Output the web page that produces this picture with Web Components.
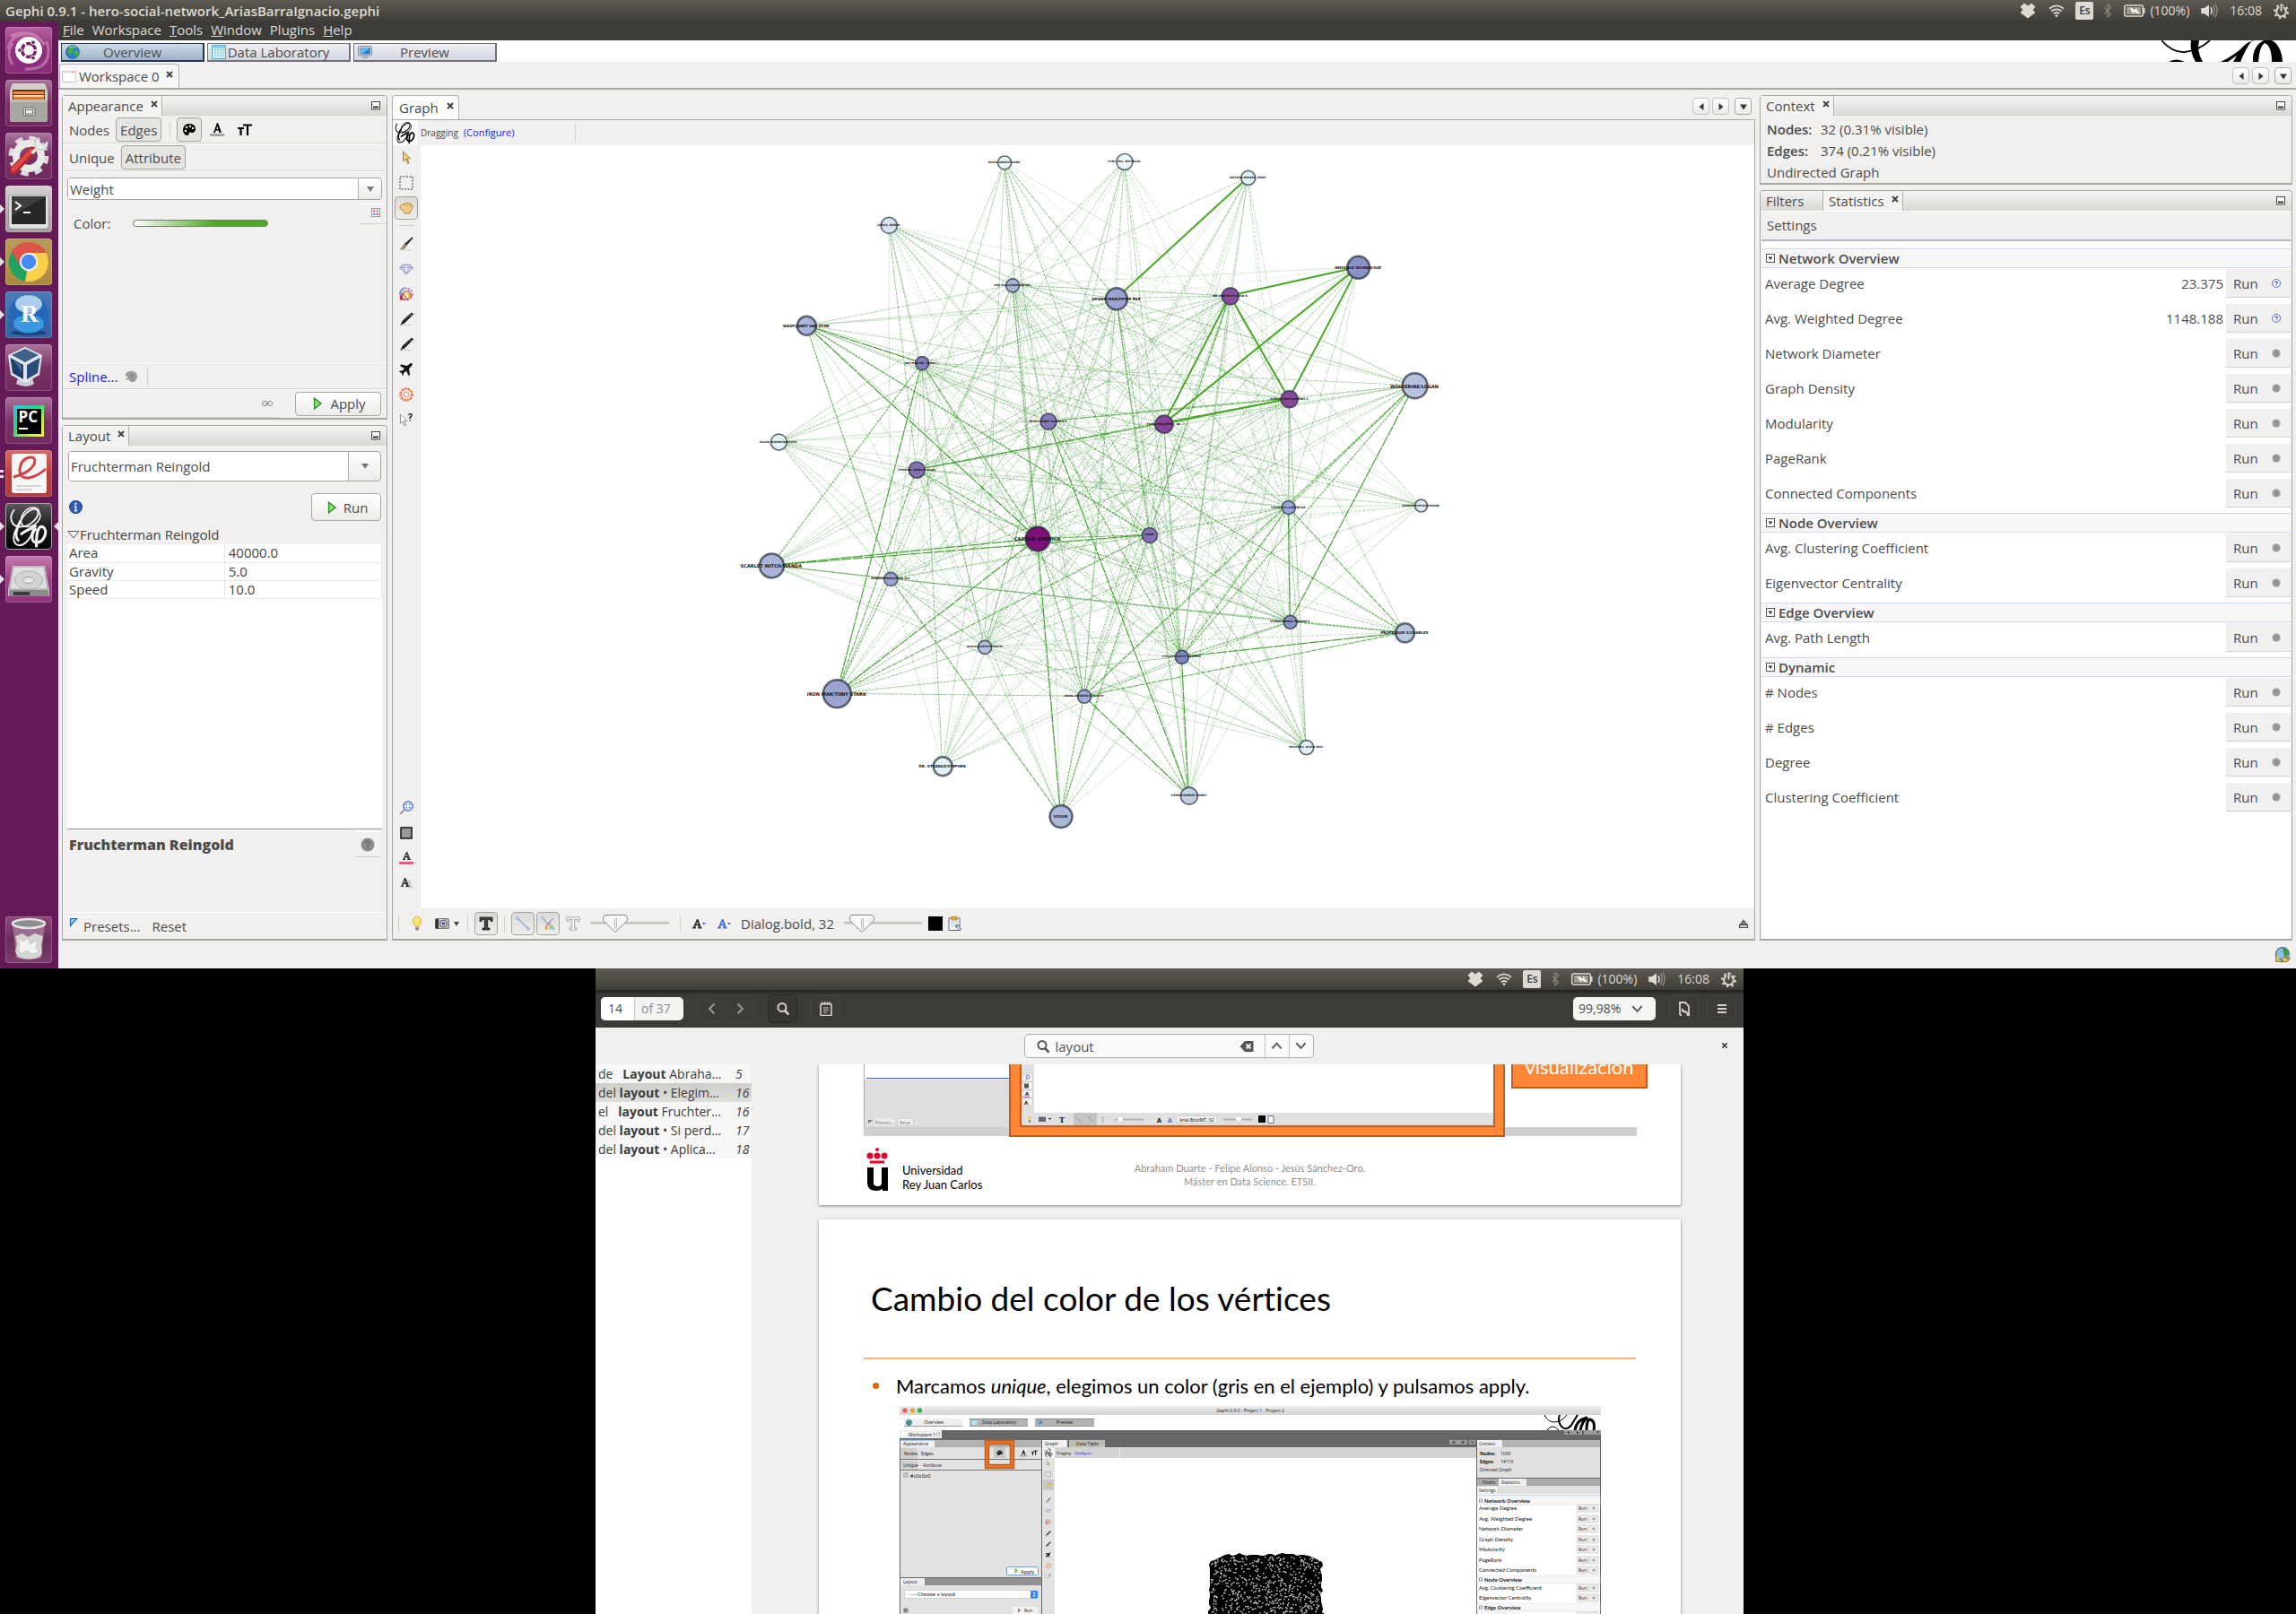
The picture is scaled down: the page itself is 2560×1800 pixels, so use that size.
<!DOCTYPE html>
<html lang="es">
<head>
<meta charset="utf-8">
<title>Gephi 0.9.1 - hero-social-network_AriasBarraIgnacio.gephi</title>
<style>
html,body{margin:0;background:#000}
body{font:15px/20px "Open Sans","Noto Sans",sans-serif;color:#4c4c4c;min-height:100vh}
</style>
</head>
<body>
<dual-desktop></dual-desktop>
<script>
const BASE = `<style>
*{box-sizing:border-box}
button,a,input,select{font:inherit;color:inherit}
button{background:none;border:0;padding:0;margin:0}
a{color:#1a1aff;text-decoration:none}
svg{display:block}
</style>`;
const define = (tag, html, ready) => customElements.define(tag, class extends HTMLElement {
  constructor() {
    super();
    this.attachShadow({mode: 'open'});
  }
  connectedCallback() {
    this.shadowRoot.innerHTML = BASE + (typeof html === 'function' ? html(this) : html);
    if (ready) ready(this, this.shadowRoot);
  }
});

/* ---------- icon set ---------- */
const GEPHI_G = `<path d="M4 3C0 8 2 14 8 14c6 0 12-6 11-10C18 1 12 3 8 10 4 17 2 22 5 25c4 3 10-3 11-10" fill="none" stroke-width="1.100"/><path d="M20 5C22 9 17 14 12 14 7 14 7 7 12 3 15 1 19 1 20 5" fill="none" stroke-width=".9"/><path d="M8 19c3-3 8-4 10-6M8 10C5 16 4 21 7 23" fill="none" stroke-width="1.600"/><path d="M18 15c-3 2-4 9 0 9 5 0 8-8 4-10-4-1-4 8-4 13" fill="none" stroke-width="1.800"/>`;
const ICONS = {
  globe: `<circle cx="8" cy="8" r="7.3" fill="#2f7fd6" stroke="#1b4f94"/><path d="M3 4c2-2 4-3 6-2l1 2-2 1 1 2-2 2-1 3-2-3-2-1zM10 7l3-1 2 2-1 4-2 2-1-3-2-2z" fill="#3fae3a"/><path d="M4 3q4-3 8 0" stroke="#bfe3ff" fill="none"/>`,
  grid: `<rect x=".5" y=".5" width="15" height="15" fill="#fff" stroke="#4aa3c9"/><path d="M.5 3h15M.5 1.5h15" stroke="#7fd0ea" stroke-width="2"/><path d="M4 3v12M7 3v12M10 3v12M13 3v12M1 6h14M1 9h14M1 12h14" stroke="#8fcde2"/>`,
  screen: `<rect x=".5" y="1.5" width="15" height="10.5" rx="1" fill="#d7dade" stroke="#888"/><rect x="2" y="3" width="12" height="7.5" fill="#2d7fd0"/><path d="M2 3h12L4 10.5H2z" fill="#6db4ee"/><path d="M5 14.5h6l-1-2H6z" fill="#b9bcc0" stroke="#888" stroke-width=".5"/>`,
  wsp: `<rect x=".5" y="2.500" width="15" height="12" fill="#fff" stroke="#c9c9c9"/><path d="M1 3.500h14" stroke="#dfe3ea" stroke-width="2"/><path d="M11 3.500h3" stroke="#f0a0a0" stroke-width="1.500"/>`,
  palette: `<path d="M8 1C4 1 1 4 1 8c0 3 2 6 5 6 2 0 1-2 2-3s2 0 4 0c2-1 3-2 3-4C15 3 12 1 8 1z" fill="#000"/><circle cx="5" cy="5" r="1.200" fill="#f1f0ee"/><circle cx="9" cy="3.700" r="1.200" fill="#f1f0ee"/><circle cx="12" cy="6" r="1.200" fill="#f1f0ee"/><circle cx="4" cy="9" r="1.200" fill="#f1f0ee"/>`,
  acolor: `<path d="M8 0L4 11h2l.7-2.500h3L10.500 11H13L9 0zM7.300 7L8.300 3.500 9.300 7z" fill="#000"/><path d="M0 13.500h16" stroke="#999" stroke-width="2.500"/>`,
  tsize: `<path d="M0 6h7M3.500 6v8M6 2.500h10M11 2.500V14" stroke="#000" stroke-width="2.200" fill="none"/>`,
  minimize: `<rect x="3.500" y="3.500" width="9" height="8.500" fill="#fff" stroke="#444"/><path d="M5 9.500h6" stroke="#333" stroke-width="2"/>`,
  close: `<path d="M5 5l6 6M11 5l-6 6" stroke="#444" stroke-width="2"/>`,
  dots: `<rect x="3.500" y="3.500" width="9" height="9" fill="#fff" stroke="#999"/><path d="M5 5h2.500v2.500H5z" fill="#e7a"/><path d="M8.500 5H11v2.500H8.500z" fill="#7c5"/><path d="M5 8.500h2.500V11H5z" fill="#69e"/><path d="M8.500 8.500H11V11H8.500z" fill="#b6c"/>`,
  blobgray: `<path d="M2 5q3-4 8-3 5 1 5 6-1 6-6 6-3 0-3-3-2 1-5 0 4-1 3-3-3-1-2-3z" fill="#9c9c9c"/><circle cx="9" cy="7" r="1.500" fill="#777"/>`,
  chain: `<path d="M4 5.500H6.500Q8 6 8 8t-1.500 2.500H4Q2.500 10 2.500 8T4 5.500zM9.500 5.500H12q1.500.5 1.500 2.500T12 10.500H9.500Q8 10 8 8t1.500-2.500zM5 8h6" fill="none" stroke="#888"/>`,
  play: `<path d="M4.500 2v12L12 8z" fill="#8fdc7a" stroke="#1f8a1f" stroke-width="1.200"/>`,
  info: `<circle cx="8" cy="8" r="6.500" fill="#2e5cb8" stroke="#1c3f86"/><path d="M8 7v5M6.500 7H8M6.500 12h3" stroke="#fff" stroke-width="1.500"/><circle cx="8" cy="4.500" r="1.100" fill="#fff"/>`,
  helpbig: `<circle cx="8" cy="8" r="7.500" fill="#8c8c8c"/><path d="M6 6q0-2 2-2t2 2q0 1-2 2.500V10M8 11v1.500" fill="none" stroke="#6c6c6c" stroke-width="1.500"/>`,
  helpgray: `<circle cx="8" cy="8" r="4.500" fill="#9a9a9a"/><path d="M7 7q1-1.500 2 0L8 8.500M8 9.500v1" fill="none" stroke="#808080"/>`,
  helpblue: `<circle cx="8" cy="8" r="4.500" fill="#fff" stroke="#4a6ce0"/><path d="M6.500 7Q8 4.500 9.500 7L8 8.500M8 9.500v1.200" fill="none" stroke="#2b4fd0" stroke-width="1.200"/>`,
  preset: `<path d="M1.500 1.500h7l-7 8z" fill="#9fc9ee" stroke="#1b6aa8" stroke-width="1.200"/>`,
  tri: `<path d="M2 4.500h12L8 12z" fill="#fff" stroke="#555"/>`,
  arrow: `<path d="M4.500 1v11l3-3 2 5.500 1.500-.7-2-5h3.500z" fill="#f0cf86" stroke="#9c7430" stroke-width=".9"/>`,
  rect: `<rect x="1" y="1" width="14" height="14" fill="none" stroke="#333" stroke-dasharray="2 1.500"/>`,
  hand: `<path d="M3 5q1-3 3-1 1-3 3-1 2-2 3 1 3-1 3 3-1 4-3 5v2H6v-2Q1 10 1 7q1-2 2-2z" fill="#f2cd84" stroke="#a97b2c" stroke-width=".9"/><path d="M6 4v3M9 4v3M12 4v3" stroke="#c79a4b" stroke-width=".8"/>`,
  brush: `<path d="M15 1L8 9l-1-1z" fill="#333" stroke="#222" stroke-width="1.500"/><path d="M7 8l1.500 1.500Q7 14 1.500 14 4 13 4 11q1-3 3-3z" fill="#a9935d" stroke="#6d5f3c" stroke-width=".7"/><path d="M3 15h11" stroke="#bbb" stroke-width=".7"/>`,
  diamond: `<path d="M4 3h8l3.500 3.500L8 14 .5 6.500z" fill="#c9cbe4" stroke="#8b8dbb" stroke-width=".8"/><path d="M.5 6.500h15M5 6.500L8 14l3-7.500L8 3z" fill="#e9eaf8" stroke="#8b8dbb" stroke-width=".6"/>`,
  bucket: `<circle cx="8" cy="8" r="6.500" fill="none" stroke="#b46be0" stroke-width="2" stroke-dasharray="2 1.500"/><path d="M1 8a7 7 0 0 1 6-7" stroke="#4aa3e0" fill="none" stroke-width="2" stroke-dasharray="2 1"/><path d="M4 7l6-3 4 6-5 4z" fill="#f4e9b0" stroke="#a33"/><path d="M10 7q3 2 1 6" stroke="#f0b400" stroke-width="2" fill="none"/><path d="M1 14.500Q0 9 5 6q-2 4-1 7l5 1.500z" fill="#c9282d"/>`,
  pencil: `<path d="M14 1l1.500 1.500L6 12l-3 1 1-3z" fill="#333" stroke="#111"/><path d="M12 2.500l2 2" stroke="#aaa"/><path d="M1 14.500h13" stroke="#bbb" stroke-width=".7"/><path d="M1 15l2-3 1 1z" fill="#111"/>`,
  plane: `<path d="M14.500 1.500q1 1-1 3L11 7l1 7-1.500 1L8 9.500 5 12v2l-1 1-1.300-3L0 10.500l1-1h2.500L6 7 1 4l1-1.500 7 1.500 2.500-2q2-1.500 3-.5z" fill="#111"/>`,
  heat: `<circle cx="8" cy="8" r="6.500" fill="none" stroke="#f2743a" stroke-width="2.500" stroke-dasharray="2.500 1"/><circle cx="8" cy="8" r="3" fill="none" stroke="#f2743a" stroke-width="1.200" stroke-dasharray="1.500 .8"/>`,
  cursorq: `<path d="M1.500 2v10.500l2.500-2.500 2 5 1.500-.7-2-4.800H9z" fill="#fff" stroke="#888" stroke-width=".9"/><path d="M10.500 3Q12 .5 14 2.500q.5 1.500-1.800 3V7M12.200 8.200v1.300" fill="none" stroke="#222" stroke-width="1.500"/>`,
  zoom: `<circle cx="10" cy="6" r="5.200" fill="#e8f0ff" stroke="#3a5fd0" stroke-width="1.200"/><path d="M8 5V4h1M11 4h1v1M12 7v1h-1M9 8H8V7" fill="none" stroke="#1f46c0"/><path d="M6 10l-5 5" stroke="#999" stroke-width="2"/>`,
  graysq: `<rect x="2" y="2" width="12" height="12" fill="#999" stroke="#111" stroke-width="1.500"/>`,
  apink: `<path d="M8 1L4.500 9H4v1h3V9h-.7l.5-1.500h2.500L9.800 9H9v1h4V9h-.7L9.200 1zM7.200 6l1-2.600L9 6z" fill="#333"/><path d="M0 13.500h16" stroke="#ff4f86" stroke-width="3"/>`,
  ashadow: `<path d="M10 4l-3 9h6l1 1h1L12 4z" fill="#ccc"/><path d="M6 2L2.500 11H2v1h3v-1h-.7l.6-2h2.500l.7 2H7.500v1h4v-1h-.7L7.400 2zM5.200 7.500l1-2.800.9 2.800z" fill="#333"/>`,
  bulb: `<path d="M8 .5Q3.500 1 3.500 5q0 2 1.800 4l.7 2h4l.7-2q1.800-2 1.800-4Q12.500 1 8 .5z" fill="#fbe36a" stroke="#c9a227" stroke-width=".8"/><path d="M6 12h4v2.500L8 16l-2-1.500z" fill="#8d8d8d"/><path d="M6 3q1-1.500 2.500-1" stroke="#fff" fill="none"/>`,
  camera: `<rect x=".5" y="2.500" width="15" height="11" rx="1" fill="#b9b9bd" stroke="#77777d"/><path d="M.5 3H4v10.500H.5z" fill="#333"/><circle cx="9.500" cy="8" r="3.800" fill="#d9dbe6" stroke="#555"/><circle cx="9.500" cy="8" r="1.800" fill="#3c4f8c"/><path d="M5 3.500h3" stroke="#eee"/>`,
  bigt: `<path d="M1 1h14v4.500h-2V3.500H9.700V13H12v2H4v-2h2.300V3.500H3V5.500H1z" fill="#444" stroke="#111" stroke-width=".8"/>`,
  ghostt: `<path d="M1 1h14v4.500h-2V3.500H9.700V13H12v2H4v-2h2.300V3.500H3V5.500H1z" fill="#fafafa" stroke="#9a9a9a" stroke-width=".9"/>`,
  edge: `<path d="M2 2l12 12" stroke="#8aa9cf" stroke-width="1.300"/><circle cx="2" cy="2" r="1.500" fill="#cfe0f5" stroke="#7c9cc6" stroke-width=".7"/><circle cx="14" cy="14" r="1.500" fill="#cfe0f5" stroke="#7c9cc6" stroke-width=".7"/>`,
  rainbow: `<path d="M6 15Q5 9 11 7" stroke="#f08b7b" stroke-width="2" fill="none"/><path d="M8 15q0-5 5-6" stroke="#f5dd7a" stroke-width="2" fill="none"/><path d="M10 15q0-3 4-4" stroke="#8fd49a" stroke-width="2" fill="none"/><path d="M2 2l12 12M14 2L8 8" stroke="#8aa9cf" stroke-width="1.100"/><circle cx="2" cy="2" r="1.400" fill="#cfe0f5" stroke="#7c9cc6" stroke-width=".6"/><circle cx="14" cy="14" r="1.400" fill="#cfe0f5" stroke="#7c9cc6" stroke-width=".6"/>`,
  ablack: `<path d="M6 3L2 12H1v1.500h4V12h-.8l.6-1.800h2.600L8 12H7v1.500h4.500V12h-.8L7.500 3zM5.300 8.800l1-2.800.9 2.800z" fill="#333"/><path d="M12 7h4l-2 2.500z" fill="#3a5fd0"/>`,
  ablue: `<path d="M6 3L2 12H1v1.500h4V12h-.8l.6-1.800h2.600L8 12H7v1.500h4.500V12h-.8L7.500 3zM5.300 8.800l1-2.800.9 2.800z" fill="#4a6fd8"/><path d="M12 7h4l-2 2.500z" fill="#3a5fd0"/>`,
  clip: `<rect x="1" y="2" width="12" height="13.500" fill="#fff" stroke="#55667e"/><rect x="4" y=".5" width="6" height="3.500" fill="#f0b04a" stroke="#9c6a1c" stroke-width=".7"/><path d="M3 6h8M3 8.500h5M3 11h4" stroke="#a7b7cf"/><path d="M9 9q3-1 3 2l3 3-2 1.500-3-3q-2 0-2-2l2 1z" fill="#cfd8e6" stroke="#4a5f80" stroke-width=".8"/>`,
  eject: `<path d="M4 9l4-5 4 5z" fill="#888" stroke="#444"/><rect x="3.500" y="9.500" width="9" height="3" fill="#ddd" stroke="#444"/>`,
  left: `<path d="M10.500 4v8L5.500 8z" fill="#333"/>`,
  right: `<path d="M5.500 4v8l5-4z" fill="#333"/>`,
  down: `<path d="M4 5.500h8L8 11.500z" fill="#333"/>`,
  update: `<circle cx="8" cy="7" r="6.500" fill="#8ec0e8" stroke="#3b6b8c"/><path d="M8 1q6 1 6 6l-3 3-2-3z" fill="#3f9a3b"/><path d="M1.500 7v7.500h7L6.500 12q4-1 5-4-1 6 4 3-2 5-7 3.500L6 15" fill="#e8c874" stroke="#7d5a17" stroke-width=".8"/>`,
  box: `<rect x="3.500" y="3.500" width="9" height="9" fill="#fff" stroke="#555"/><path d="M5.500 6.500h5L8 10z" fill="#333"/>`,
  dropbox: `<path d="M4.500.5L8 3l3.500-2.500L15.500 4 13 7l2.500 3-3.500 2.500-4 3-4-3L.5 10 3 7 .5 4z" fill="#dfdbd2"/>`,
  wifi: `<path d="M1 6q7-6 14 0M3 8.500q5-4 10 0M5 11q3-2.500 6 0" fill="none" stroke="#dfdbd2" stroke-width="1.600"/><circle cx="8" cy="13" r="1.300" fill="#dfdbd2"/>`,
  bt: `<path d="M4.500 4.500l7 7L8 15V1l3.500 3.500-7 7" fill="none" stroke="#8a877f" stroke-width="1.200"/>`,
  sound: `<path d="M1 5.500h3L8 2.500v11l-4-3H1z" fill="#dfdbd2"/><path d="M9.500 5q2 3 0 6" stroke="#dfdbd2" stroke-width="1.300" fill="none"/><path d="M11.500 3q3 5 0 10M13.500 2q3.500 6 0 12" stroke="#8a877f" stroke-width="1.200" fill="none"/>`,
  gear: `<circle cx="8" cy="8.500" r="5" fill="none" stroke="#dfdbd2" stroke-width="1.800"/><circle cx="8" cy="8.500" r="6.900" fill="none" stroke="#dfdbd2" stroke-width="2" stroke-dasharray="2.400 3.020"/><path d="M8 2v6" stroke="#4a4841" stroke-width="4"/><path d="M8 .5V8" stroke="#dfdbd2" stroke-width="1.800"/>`,
  prev: `<path d="M10.500 2.500L5 8l5.500 5.500" fill="none" stroke="#9c998f" stroke-width="2"/>`,
  next: `<path d="M5.500 2.500L11 8l-5.500 5.500" fill="none" stroke="#9c998f" stroke-width="2"/>`,
  search: `<circle cx="7" cy="6.500" r="4.500" fill="none" stroke="currentColor" stroke-width="2"/><path d="M10 10l4.500 4.500" stroke="currentColor" stroke-width="2.500"/>`,
  notes: `<rect x="2" y="2.500" width="12" height="13" rx="1" fill="none" stroke="#d5d1c6" stroke-width="1.600"/><path d="M4 0v4M6.700 0v4M9.300 0v4M12 0v4M5 7h6M5 9.500h6M5 12h4" stroke="#d5d1c6" stroke-width="1.200"/>`,
  chev: `<path d="M2.500 4.500L8 10.500l5.500-6" fill="none" stroke="#555" stroke-width="2"/>`,
  chevup: `<path d="M2.500 11L8 5l5.500 6" fill="none" stroke="#555" stroke-width="2"/>`,
  pagew: `<path d="M3 15V1h6l4 4v10h-2M3 15h2" fill="none" stroke="#d5d1c6" stroke-width="1.800"/><path d="M6 8q-1 4 3 3l4 4" fill="none" stroke="#d5d1c6" stroke-width="2.200"/>`,
  burger: `<path d="M3 4h10M3 8h10M3 12h10" stroke="#d5d1c6" stroke-width="2"/>`,
  clear: `<path d="M.5 8L6 2h9.500v12H6z" fill="#555"/><path d="M7.500 5.500l5 5M12.500 5.500l-5 5" stroke="#fff" stroke-width="1.800"/>`
};
define('ui-icon', el => {
  const s = el.getAttribute('size') || 16;
  return `<style>:host{display:inline-block;flex:none;width:${s}px;height:${s}px}</style><svg width="${s}" height="${s}" viewBox="0 0 16 16" aria-hidden="true">${ICONS[el.getAttribute('name')] || ''}</svg>`;
});

/* ---------- desktop ---------- */
define('dual-desktop', `<style>
:host{display:flex;flex-direction:column;min-height:100vh;background:#000}
gephi-desktop{height:60vh}
.lower{flex:1;display:grid;grid-template-columns:664fr 1280fr 616fr;min-height:0}
pdf-desktop{grid-column:2;height:40vh}
</style>
<gephi-desktop></gephi-desktop>
<div class="lower"><pdf-desktop></pdf-desktop></div>`);

define('system-tray', `<style>
:host{display:flex;align-items:center;height:24px;padding-right:8px;color:#dfdbd2;font-size:14px;line-height:24px}
.es{margin:0 8px 0 12px;width:20px;height:20px;border-radius:2px;background:#dfdbd2;color:#3c3b37;font-weight:600;font-size:12px;line-height:20px;text-align:center}
.w{margin:0 0 0 14px}
.bat{margin:0 5px 0 10px}
.s{margin:0 13px 0 12px}
.g{margin-left:13px}
</style>
<ui-icon name="dropbox" size="18"></ui-icon><ui-icon class="w" name="wifi" size="18"></ui-icon><span class="es">Es</span><ui-icon name="bt" size="16"></ui-icon>
<svg class="bat" width="24" height="14" viewBox="0 0 24 14"><rect x=".8" y="1" width="20.500" height="12" rx="2" fill="none" stroke="#dfdbd2" stroke-width="1.500"/><rect x="3" y="3" width="16" height="8" fill="#9d9a92"/><path d="M22.500 4v6" stroke="#dfdbd2" stroke-width="2"/><path d="M6 3l7 3.500V3.500L18 11l-7-3v3z" fill="#fff"/></svg>
<span>(100%)</span><ui-icon class="s" name="sound" size="20"></ui-icon><span>16:08</span><ui-icon class="g" name="gear" size="17"></ui-icon>`);

define('system-bar', `<style>
:host{display:flex;justify-content:space-between;height:24px;background:linear-gradient(#5d5a50,#3f3e39);color:#dfdbd2}
.t{padding-left:6px;font-weight:600;font-size:15px;line-height:24px}
</style><span class="t"><slot></slot></span><system-tray></system-tray>`);

define('gephi-desktop', `<style>
:host{display:flex;flex-direction:column;background:#f1f0ee}
.row{flex:1;display:flex;min-height:0}
.app{flex:1;display:flex;flex-direction:column;min-width:0}
.work{flex:1;display:grid;grid-template-columns:363px minmax(0,1fr) 594px;gap:5px;padding:6px 4px 0;min-height:0}
.col{display:flex;flex-direction:column;gap:6px;min-height:0}
.grow{flex:1;min-height:0}
footer{height:31px;display:flex;justify-content:flex-end;align-items:center;padding-right:6px}
</style>
<system-bar>Gephi 0.9.1 - hero-social-network_AriasBarraIgnacio.gephi</system-bar>
<div class="row">
 <launcher-dock></launcher-dock>
 <div class="app">
  <menu-bar></menu-bar><mode-banner></mode-banner><workspace-tabs></workspace-tabs>
  <div class="work">
   <div class="col"><dock-panel tabs="Appearance"><appearance-form></appearance-form></dock-panel><dock-panel class="grow" tabs="Layout"><layout-form></layout-form></dock-panel></div>
   <graph-panel></graph-panel>
   <div class="col"><dock-panel tabs="Context"><context-info></context-info></dock-panel><dock-panel class="grow" tabs="Filters,Statistics" active="1"><statistics-list></statistics-list></dock-panel></div>
  </div>
  <footer><ui-icon name="update" size="18"></ui-icon></footer>
 </div>
</div>`);

/* ---------- launcher ---------- */
const PURPLE = ['#a8759b', '#7c3168', '#6f2a5e'];
const TILES = [
 {n:'Dash', bg:['#b8619f','#8f2f7c','#8a2d78'], art:`<path d="M6 10Q30 0 44 20M3 25Q6 6 30 8M48 30Q46 48 22 47M8 42Q0 30 8 18M40 44Q52 34 46 16" stroke="#d9a8cc" stroke-opacity=".5" stroke-width="3" fill="none"/><circle cx="26" cy="26" r="15" fill="#fff"/><circle cx="26" cy="26" r="7.500" fill="none" stroke="#7c2366" stroke-width="3.500" stroke-dasharray="13.700 2" stroke-dashoffset="-1"/><circle cx="16" cy="26" r="2.400" fill="#7c2366" stroke="#fff"/><circle cx="31" cy="17.300" r="2.400" fill="#7c2366" stroke="#fff"/><circle cx="31" cy="34.700" r="2.400" fill="#7c2366" stroke="#fff"/>`},
 {n:'Files', bg:PURPLE, art:`<path d="M8 4h36l3 8v32q0 3-3 3H8q-3 0-3-3V12z" fill="#cfcfcb"/><path d="M8 11h36v12H8z" fill="#6b3016"/><path d="M9 13h34v3H9z" fill="#ef8d3e"/><path d="M9 17h34v2H9z" fill="#f9d9b3"/><path d="M9 19h34v3H9z" fill="#e8752c"/><path d="M5 22h42v22q0 3-3 3H8q-3 0-3-3z" fill="#a6a7a3"/><path d="M5 22h42v3H5z" fill="#bcbdb9"/><rect x="20" y="31" width="13" height="9" rx="2" fill="#d7d7d4" stroke="#6b6b68"/><rect x="22.500" y="33.500" width="8" height="4.500" fill="#eee" stroke="#555" stroke-width=".8"/>`},
 {n:'Settings', bg:PURPLE, art:`<circle cx="26" cy="26" r="19" fill="none" stroke="#dcdcda" stroke-width="7" stroke-dasharray="8 6.900"/><circle cx="26" cy="26" r="14" fill="none" stroke="#e9e9e7" stroke-width="8"/><path d="M9 42L30 20" stroke="#b4262a" stroke-width="9" stroke-linecap="round"/><path d="M9 41L29 20" stroke="#e0474a" stroke-width="5" stroke-linecap="round"/><path d="M28 22l6-6Q30 9 38 5l1 6 4 2 4-4q2 8-5 10-4 1-5-1l-6 6z" fill="#e7e7e7" stroke="#999" stroke-width=".6"/>`},
 {n:'Terminal', run:1, bg:['#d7d2d6','#b9b0b7','#a79ba4'], art:`<path d="M4 11h44v34q0 3-3 3H7q-3 0-3-3z" fill="#e2e2e0" stroke="#888" stroke-width=".6"/><rect x="7" y="12" width="38" height="31" fill="#262827"/><path d="M7 12h38L7 34z" fill="#3d3f3e"/><path d="M11 18l6 4.500-6 4.500" stroke="#fff" stroke-width="2" fill="none"/><path d="M20 30h8" stroke="#fff" stroke-width="2"/>`},
 {n:'Chrome', run:1, bg:['#b79a5a','#b5954a','#a98b3f'], art:`<circle cx="26" cy="26" r="22" fill="#de5347"/><path d="M26 26L6.900 15A22 22 0 0 0 22 47.700z" fill="#1ea362"/><path d="M26 26h0L22 47.700A22 22 0 0 0 45.500 16H26z" fill="#fdd04c"/><path d="M7 15l9 15 10-14h19.500A22 22 0 0 0 7 15z" fill="#de5347"/><circle cx="26" cy="26" r="10.300" fill="#eef1f7"/><circle cx="26" cy="26" r="8.200" fill="#4a8af4"/>`},
 {n:'RStudio', run:1, bg:['#4e7cb8','#3c6db0','#33609f'], art:`<ellipse cx="26" cy="46" rx="20" ry="3" fill="#1d3f78"/><circle cx="26" cy="25.500" r="22" fill="#2367b8"/><ellipse cx="26" cy="36" rx="17" ry="10" fill="#41a6e8" opacity=".8"/><ellipse cx="26" cy="14" rx="15" ry="10" fill="#dcecfb" opacity=".75"/><text x="27" y="34" text-anchor="middle" font-family="Liberation Serif" font-weight="700" font-size="27" fill="#fff">R</text>`},
 {n:'VirtualBox', bg:PURPLE, art:`<path d="M14 38h16l2 6q-8 6-20 0z" fill="#c9ced6"/><path d="M22 3L41 12 38 34 22 43 6 34 3 12z" fill="#dfe5ee"/><path d="M22 5L37 12 22 20 7 12z" fill="#3d6286"/><path d="M5.500 15L20 23v16L8 32z" fill="#1e3f68"/><path d="M38.500 15L24 23v16l12-7z" fill="#2a4c78"/><path d="M9 18l9 5v8z" fill="#426b97"/>`},
 {n:'PyCharm', bg:PURPLE, art:`<defs><linearGradient id="pc" x1="0" y1="0" x2="1" y2="1"><stop offset="0" stop-color="#35c4f0"/><stop offset=".4" stop-color="#21d789"/><stop offset=".7" stop-color="#b7ef4e"/><stop offset="1" stop-color="#fcf84a"/></linearGradient></defs><rect x="9" y="9" width="34" height="35" fill="url(#pc)"/><rect x="13" y="13" width="27" height="28" fill="#000"/><text x="14.500" y="28" font-family="Open Sans" font-weight="700" font-size="17" fill="#fff">PC</text><path d="M15 35h10" stroke="#fff" stroke-width="2"/>`},
 {n:'Document viewer', run:2, bg:['#d76a63','#b93f3f','#b03a3d'], art:`<rect x="7" y="4" width="39" height="44" rx="3" fill="#f7f7f6"/><path d="M9 30Q26 26 32 16q3-9-5-8-10 2-11 14 0 10 10 9 10-2 19-10" stroke="#d64045" stroke-width="3" fill="none"/><path d="M12 40h28M12 44h18" stroke="#c9c9c9" stroke-width="1.500"/>`},
 {n:'Gephi', run:3, bg:['#5a5a5a','#1c1c1c','#000'], art:`<rect x=".5" y=".5" width="51" height="51" rx="3.500" fill="none" stroke="#aaa"/><g transform="translate(3 2) scale(1.750)" stroke="#f2f2f2">${GEPHI_G}</g>`},
 {n:'Disk', run:1, bg:['#c479ae','#9c3c86','#94357d'], art:`<path d="M8 11h36l5 27v7H3v-7z" fill="#c3c6c2"/><path d="M9 12h34l4 25H5z" fill="#dfe1de" stroke="#a7a9a6"/><ellipse cx="26" cy="27" rx="16" ry="10" fill="#d2d4d1" stroke="#b0b2af"/><ellipse cx="26" cy="27" rx="6" ry="3.500" fill="#e9e9e8" stroke="#9c9c9a"/><path d="M4 38h44v7H4z" fill="#8b8d8a"/><path d="M9 40h18v4H9z" fill="#3b3b3b"/>`}
];
const tile = t => `<button class="tile" aria-label="${t.n}" style="background:linear-gradient(${t.bg.join()})">${t.run ? `<svg class="pip" width="5" height="12" viewBox="0 0 5 12">${t.run === 2 ? '<path d="M0 2h4v3H0zM0 8h4v3H0z" fill="#e6dfe4"/>' : '<path d="M0 1l5 5-5 5z" fill="#e6dfe4"/>'}</svg>` : ''}${t.run === 3 ? '<svg class="pip r" width="5" height="12" viewBox="0 0 5 12"><path d="M5 1L0 6l5 5z" fill="#e6dfe4"/></svg>' : ''}<svg width="52" height="52" viewBox="0 0 52 52">${t.art}</svg></button>`;
define('launcher-dock', () => `<style>
:host{display:flex;flex-direction:column;gap:7px;width:65px;flex:none;padding:6px 7px 6px 6px;background:#651a58}
.tile{position:relative;width:52px;height:52px;border-radius:4px;box-shadow:inset 0 0 0 1px #ffffff33}
.pip{position:absolute;left:-6px;top:20px}.pip.r{left:auto;right:-7px}
.last{margin-top:auto;display:flex}
</style>${TILES.map(tile).join('')}<div class="last">${tile({n:'Trash', bg:['#8b4a7a','#6b2a5c','#7c3f6e'], art:`<path d="M8 8l4 38q14 5 28 0l4-38z" fill="#e9d9e6" opacity=".35"/><ellipse cx="26" cy="8" rx="18" ry="5" fill="#8d8f8e" stroke="#e2e3e2" stroke-width="2.500"/><path d="M11 22l8-3 6 4 8-4 9 3-2 10 1 9-3 4q-12 5-24 0l-3-6 2-8z" fill="#d5d7d3"/><path d="M14 24l6 4 5-4 3 7 8-5-2 9 4 5-8 2-6-4-7 4-3-6 2-5z" fill="#f3f4f1" stroke="#b9bbb7" stroke-width=".7"/>`})}</div>`);

/* ---------- gephi top bars ---------- */
define('menu-bar', `<style>
:host{display:flex;gap:9px;height:21px;padding-left:5px;background:#3c3b37;color:#dfdbd2;line-height:18px}
button{height:18px}
</style><button><u>F</u>ile</button><button>Workspace</button><button><u>T</u>ools</button><button><u>W</u>indow</button><button>Plugins</button><button><u>H</u>elp</button>`);

define('mode-banner', `<style>
:host{display:flex;gap:3px;height:24px;padding:3px 14px 0 3px;background:#fff}
button{display:grid;grid-template-columns:1fr;align-items:center;width:160px;height:21px;border:2px solid #70707e;border-width:1px 2px 2px 1px;background:linear-gradient(#eeeef2,#d5d7e0);line-height:18px}
button.on{border-color:#25364a;background:linear-gradient(#cfdbe8,#9db3c8)}
button>*{grid-area:1/1}
button>ui-icon{margin-left:4px}
.logo{margin:-3px 0 0 auto}
</style><button class="on"><ui-icon name="globe"></ui-icon><span>Overview</span></button><button><ui-icon name="grid"></ui-icon><span>Data Laboratory</span></button><button><ui-icon name="screen"></ui-icon><span>Preview</span></button>
<svg class="logo" width="136" height="24" viewBox="0 0 136 24"><path d="M0 0Q12 14 26 13 42 11 54 0" fill="none" stroke="#000" stroke-width="1.800"/><path d="M33 0h9q-3 12 4 24h-8Q31 12 33 0z"/><path d="M8 24q8-5 18 0z"/><path d="M66 24Q84 15 92 6q5-5 12-6h-3q-7 9-13 24h-8l4-7q-6 4-10 7z"/><path d="M102 24q-1-17 12-24h9q11 6 12 24h-12q0-18-8-21-6 4-7 21z"/></svg>`);

define('workspace-tabs', `<style>
:host{display:flex;height:31px;border-bottom:2px solid #a9a8a4;align-items:flex-end}
.tab{display:flex;align-items:center;gap:3px;height:27px;margin-left:1px;padding:0 2px;border:1px solid #b4b2ae;border-bottom:0;border-radius:4px 4px 0 0;background:#f7f6f5}
nav-buttons{margin:0 5px 4px auto}
</style><div class="tab"><ui-icon name="wsp"></ui-icon><span>Workspace 0</span><button aria-label="Close"><ui-icon name="close"></ui-icon></button></div><nav-buttons></nav-buttons>`);

define('nav-buttons', `<style>
:host{display:flex;gap:3px}
button{width:19px;height:19px;display:grid;place-items:center;border:1px solid #c4c2be;border-radius:4px;background:linear-gradient(#fff,#eceae8)}
button:last-child{margin-left:3px;border-color:#a9a7a3}
</style><button aria-label="Left"><ui-icon name="left"></ui-icon></button><button aria-label="Right"><ui-icon name="right"></ui-icon></button><button aria-label="List"><ui-icon name="down"></ui-icon></button>`);

/* ---------- docked panels ---------- */
define('dock-panel', el => {
  const tabs = el.getAttribute('tabs').split(','), act = +(el.getAttribute('active') || 0);
  return `<style>
:host{display:flex;flex-direction:column;border:1px solid #a9a8a4;border-radius:4px 4px 0 0;border-bottom-width:2px}
header{display:flex;height:22px;background:linear-gradient(#f6f5f4,#d9d7d4);border-radius:3px 3px 0 0}
.tab{display:flex;align-items:center;gap:4px;padding:0 0 0 6px;border-right:1px solid #b4b2ae;min-width:70px}
.tab.on{background:#f4f3f1}
.min{margin:0 4px 0 auto;display:flex;align-items:center}
.body{flex:1 1 auto;display:flex;flex-direction:column;min-height:0}
::slotted(*){flex:1 1 auto}
</style><header>${tabs.map((t, i) => `<div class="tab ${i === act ? 'on' : ''}"><span>${t}</span>${i === act ? '<button aria-label="Close"><ui-icon name="close"></ui-icon></button>' : ''}</div>`).join('')}<button class="min" aria-label="Minimize"><ui-icon name="minimize"></ui-icon></button></header><div class="body"><slot></slot></div>`;
});

const COMBO = `
.combo{display:grid;border:1px solid #a5a3a0;border-radius:4px;background:linear-gradient(#fff,#ecebe9);overflow:hidden}
.combo>*{grid-area:1/1}
.combo select{appearance:none;border:0;border-right:1px solid #b4b2ae;background:#fff;padding:0 2px;outline:0}
.combo svg{justify-self:end;align-self:center}`;
const ARROW = `<svg width="8" height="6" viewBox="0 0 8 6" aria-hidden="true"><path d="M0 0h8L4 6z" fill="#777"/></svg>`;

define('appearance-form', `<style>${COMBO}
:host{display:flex;flex-direction:column;height:337px}
.bar{display:flex;align-items:center;height:31px;padding:1px 7px 0;border-bottom:1px solid #d5d3d0;box-shadow:0 1px #fff}
.b{height:27px;padding:0 4px;border:1px solid transparent;border-radius:4px}
.b.on{border-color:#a5a3a0;background:#e6e4e1}
.bar .i{width:28px;display:grid;place-items:center}
.edges{margin:0 3px 0 4px}
.attr{margin-left:7px}
.sep{width:1px;height:18px;margin:0 4px 0 3px;background:#d0cecb}
.top{gap:3px}
.combo{margin:7px 5px 0;height:25px}
.combo select{margin-right:25px}.combo svg{margin-right:8px}
.color{display:flex;justify-content:space-between}
.color label{display:flex;align-items:center;gap:25px;margin:16px 0 0 12px}
.grad{width:151px;height:8px;border:1px solid #777;border-radius:4px;background:linear-gradient(90deg,#fff,#4aab24 60%)}
.mini{width:31px;height:22px;margin-top:5px;padding-left:7px;border:solid #d5d3d0;border-width:0 0 1px;box-shadow:0 -1px #fff}
.spl{margin-top:auto;border-top:1px solid #fbfbfb;gap:7px;height:30px}
.apply{display:flex;height:32px;align-items:center}
.apply div{width:241px;height:31px;display:flex;justify-content:flex-end;align-items:center;padding-right:5px;border-bottom:1px solid #d5d3d0}
.push{display:flex;align-items:center;justify-content:center;gap:6px;width:96px;height:27px;margin:0 6px 0 auto;border:1px solid #a9a7a3;border-radius:4px;background:linear-gradient(#fff,#ecebe9)}
</style>
<div class="bar top"><button>Nodes</button><button class="b on edges">Edges</button><span class="sep"></span><button class="b on i" aria-label="Color"><ui-icon name="palette"></ui-icon></button><button class="b i" aria-label="Label color"><ui-icon name="acolor"></ui-icon></button><button class="b i" aria-label="Label size"><ui-icon name="tsize"></ui-icon></button></div>
<div class="bar"><button>Unique</button><button class="b on attr">Attribute</button></div>
<div class="combo"><select aria-label="Attribute"><option>Weight</option></select>${ARROW}</div>
<div class="color"><label>Color: <span class="grad"></span></label><button class="mini" aria-label="Palette"><ui-icon name="dots"></ui-icon></button></div>
<div class="bar spl"><a href="#">Spline...</a><ui-icon name="blobgray"></ui-icon><span class="sep"></span></div>
<div class="apply"><div><ui-icon name="chain"></ui-icon></div><button class="push"><ui-icon name="play"></ui-icon>Apply</button></div>`);

define('layout-form', `<style>${COMBO}
:host{display:flex;flex-direction:column;min-height:0}
.combo{margin:6px 6px 0;height:34px}
.combo select{margin-right:35px}.combo svg{margin-right:13px}
.run{display:flex;align-items:center;justify-content:space-between;margin:13px 6px 0;height:31px}
.push{display:flex;align-items:center;justify-content:center;gap:5px;width:78px;height:31px;border:1px solid #a9a7a3;border-radius:4px;background:linear-gradient(#fff,#ecebe9)}
.tree{display:flex;align-items:center;height:26px;padding:3px 0 0 4px}
.tree ui-icon{margin-right:-1px}
.tree span{color:#444}
.sheet{flex:1;margin:0 5px;background:#fff;border-bottom:1px solid #999}
table{width:100%;border-collapse:collapse;table-layout:fixed}
th,td{font-weight:400;text-align:left;height:20px;padding:0 2px;line-height:19px;border-bottom:1px solid #e9e8e6;border-right:1px solid #e9e8e6;color:#444}
td{padding-left:4px}
.desc{display:flex;justify-content:space-between;height:92px;padding:3px 7px;font-size:16px;font-weight:700}
.desc strong{line-height:28px}
.help{width:28px;height:28px;display:grid;place-items:center;border:solid #d5d3d0;border-width:0 0 1px;box-shadow:0 -1px #fff}
.foot{display:flex;align-items:center;height:30px;padding-left:7px;border-top:1px solid #fff}
.foot ui-icon{align-self:flex-start;margin-top:5px}
.foot button{margin-right:13px}
</style>
<div class="combo"><select aria-label="Layout"><option>Fruchterman Reingold</option></select>${ARROW}</div>
<div class="run"><ui-icon name="info" size="17"></ui-icon><button class="push"><ui-icon name="play"></ui-icon>Run</button></div>
<div class="tree"><ui-icon name="tri"></ui-icon><span>Fruchterman Reingold</span></div>
<div class="sheet"><table><tr><th>Area</th><td>40000.0</td></tr><tr><th>Gravity</th><td>5.0</td></tr><tr><th>Speed</th><td>10.0</td></tr></table></div>
<div class="desc"><strong>Fruchterman Reingold</strong><button class="help" aria-label="Help"><ui-icon name="helpbig"></ui-icon></button></div>
<div class="foot"><ui-icon name="preset"></ui-icon><button>Presets...</button><button>Reset</button></div>`);

/* ---------- graph ---------- */
define('graph-panel', `<style>
:host{display:flex;flex-direction:column;min-height:0}
.tabs{display:flex;justify-content:space-between;height:27px}
.tab{display:flex;align-items:center;gap:5px;padding:0 0 0 7px;width:75px;border:1px solid #b4b2ae;border-bottom:0;border-radius:4px 4px 0 0;background:#fdfdfd}
nav-buttons{margin:3px 4px 0 0}
.frame{flex:1;display:flex;flex-direction:column;border:1px solid #a9a8a4;border-bottom-width:2px;min-height:0}
.top{display:flex;align-items:center;height:28px;font-size:10px}
.logo{width:27px;height:28px;background:#fff;margin-right:4px}
.top a{margin-left:6px;font-size:11px}
.top .sep{margin-left:67px}
.mid{flex:1;display:flex;min-height:0}
.tools{display:flex;flex-direction:column;align-items:center;gap:2px;width:31px;padding:1px 1px 15px 0}
.tools hr{width:17px;height:10px;margin:0;border:0;background:linear-gradient(#0000 4px,#d0cecb 4px,#d0cecb 5px,#0000 5px)}
.b{width:26px;height:26px;display:grid;place-items:center;border:1px solid transparent;border-radius:4px;flex:none}
.b.on{border-color:#a5a3a0;background:linear-gradient(#dcdad7,#efeeec)}
.push{margin-top:auto}
graph-canvas{flex:1;min-width:0}
.bot{display:flex;align-items:center;gap:2px;height:34px;padding:0 4px 0 1px}
.sep{flex:none;width:1px;height:18px;margin:0 5px;background:#d0cecb}
.wide{width:34px;display:flex;align-items:center;gap:5px;padding-left:4px}
.font{margin:0 4px}
input{appearance:none;width:87px;height:20px;margin:0 5px;background:linear-gradient(#0000 8px,#b9b7b3 8px,#dddbd8 11px,#0000 11px)}
input::-webkit-slider-thumb{appearance:none;width:28px;height:20px;background:url("data:image/svg+xml,%3Csvg xmlns='http://www.w3.org/2000/svg' width='28' height='20'%3E%3Cpath d='M3 .5h22q2 0 2.500 3v3L14 19.500.5 6.500v-3Q1 .5 3 .5z' fill='%23f8f7f6' stroke='%23888'/%3E%3Cpath d='M13.500 4v12M15.500 4v12' stroke='%23bbb'/%3E%3C/svg%3E")}
.swatch{width:16px;height:16px;background:#000;margin-right:4px}
.end{margin-left:auto}
</style>
<div class="tabs"><div class="tab"><span>Graph</span><button aria-label="Close"><ui-icon name="close"></ui-icon></button></div><nav-buttons></nav-buttons></div>
<div class="frame">
<div class="top"><svg class="logo" viewBox="-1 -1 28 30"><g stroke="#000">${GEPHI_G}</g></svg><span>Dragging</span><a href="#">(Configure)</a><span class="sep"></span></div>
<div class="mid"><div class="tools">
<button class="b"><ui-icon name="arrow"></ui-icon></button><button class="b"><ui-icon name="rect"></ui-icon></button><button class="b on"><ui-icon name="hand"></ui-icon></button><hr>
<button class="b"><ui-icon name="brush"></ui-icon></button><button class="b"><ui-icon name="diamond"></ui-icon></button><button class="b"><ui-icon name="bucket"></ui-icon></button><button class="b"><ui-icon name="pencil"></ui-icon></button><button class="b"><ui-icon name="pencil"></ui-icon></button><button class="b"><ui-icon name="plane"></ui-icon></button><button class="b"><ui-icon name="heat"></ui-icon></button><button class="b"><ui-icon name="cursorq"></ui-icon></button>
<button class="b push"><ui-icon name="zoom"></ui-icon></button><button class="b"><ui-icon name="graysq"></ui-icon></button><button class="b"><ui-icon name="apink"></ui-icon></button><button class="b"><ui-icon name="ashadow"></ui-icon></button>
</div><graph-canvas></graph-canvas></div>
<div class="bot"><span class="sep"></span><button class="b"><ui-icon name="bulb"></ui-icon></button><button class="b wide"><ui-icon name="camera"></ui-icon><svg width="6" height="5"><path d="M0 0h6L3 5z" fill="#444"/></svg></button><span class="sep"></span><button class="b on"><ui-icon name="bigt"></ui-icon></button><span class="sep"></span><button class="b on"><ui-icon name="edge"></ui-icon></button><button class="b on"><ui-icon name="rainbow"></ui-icon></button><button class="b"><ui-icon name="ghostt"></ui-icon></button><input type="range" aria-label="Edge weight scale" value="22"><span class="sep"></span><button class="b"><ui-icon name="ablack"></ui-icon></button><button class="b"><ui-icon name="ablue"></ui-icon></button><button class="font">Dialog.bold, 32</button><input type="range" aria-label="Font size" value="10"><span class="swatch"></span><ui-icon name="clip"></ui-icon><ui-icon class="end" name="eject"></ui-icon></div>
</div>`);

const NODES = [
 [1120,181,8,'#e8f6f8','BLACK KNIGHT/DANE',1],[1254,180,9.5,'#e9f9fc','FURY, COL. NICHOLAS',1],[991,251,9.5,'#d8e2f2','JARVIS, EDWIN',1],[899,363,11,'#a9b4d9','WASP/JANET VAN DYNE',1],
 [1129,318,8,'#a9b4d9','SHE-HULK/JENNIFER WA'],[1245,333,12.5,'#9aa3d2','SPIDER-MAN/PETER PAR'],[1028,405,8,'#8080bd','ANT-MAN/DR. HENRY J.'],[1169,470,9.5,'#8478b5','BEAST/HENRY &amp;HANK&amp; P'],
 [868,493,9.5,'#e3f2f5','BLACK WIDOW/NATASHA',1],[1022,524,9.5,'#8370b2','THOR/DR. DONALD BLAK'],[1372,330,10,'#874f9f','MR. FANTASTIC/REED R'],[1392,198,8.5,'#e3f2f5','WATSON-PARKER, MARY',1],
 [1515,298,13,'#8a93c7','INVISIBLE WOMAN/SUE',1],[1578,430,14.5,'#b7c2df','WOLVERINE/LOGAN',1],[1438,445,10,'#874a9b','HUMAN TORCH/JOHNNY S'],[1298,473,10.5,'#83449a','THING/BENJAMIN J. GR'],
 [860,631,14,'#a9b4d9','SCARLET WITCH/WANDA',1],[993,646,8,'#9aa3d2','WONDER MAN/SIMON WIL'],[1157,601,14,'#800f7a','CAPTAIN AMERICA'],[1098,722,8,'#b7c2df','QUICKSILVER/PIETRO M'],
 [933,774,16,'#9ba5d0','IRON MAN/TONY STARK',1],[1051,855,11,'#e3f2f5','DR. STRANGE/STEPHEN',1],[1183,911,13,'#abb7d9','VISION',1],[1209,777,8,'#a0a9d5','ANGEL/WARREN KENNETH'],
 [1282,597,9,'#8470b2','HAWK'],[1437,566,8,'#9da7d4','COLOSSUS II/PETER RA'],[1585,564,7.5,'#e0eef5','SHADOWCAT/KATHERINE',1],[1439,694,8,'#8c97c8','STORM/ORORO MUNROE S'],
 [1318,733,8,'#8187c0','CYCLOPS/SCOTT SUMMER'],[1567,706,11,'#bcc8e2','PROFESSOR X/CHARLES',1],[1457,834,8.5,'#e3f2f5','MASTERS, ALICIA REIS',1],[1326,888,10,'#c2cfe5','ICEMAN/ROBERT BOBBY',1]
];
const HEAVY = new Set(['5-11','10-12','12-15','12-14','10-15','10-14','14-15']);
const MID = new Set(['3-6','3-18','3-24','3-17','6-18','9-18','9-14','7-14','4-18','16-18','16-24','6-16','16-17','18-20','20-24','6-20','9-20','17-20','18-22','22-24','22-23','17-22','13-27','13-28','13-25','13-23','25-27','25-28','27-28','28-29','27-29','23-29','23-31','28-31','24-28','7-29','7-31','25-29','10-24','5-24','7-28','18-24','18-23']);
const STRONG = new Set(['18-20','16-18','18-22','25-27','13-27','3-18','3-6','6-20','9-14','7-31','23-31','28-31','28-29','16-24']);
define('graph-canvas', () => {
  let light = '', mid = '', heavy = '';
  const key = (a, b) => a < b ? a + '-' + b : b + '-' + a;
  NODES.forEach((a, i) => NODES.forEach((b, j) => {
    if (j <= i || (a[5] && b[5])) return;
    if (key(i, j) === '6-11' || key(i, j) === '17-26') return;
    const k = key(i, j), d = `M${a[0]} ${a[1]}L${b[0]} ${b[1]}`, h = (i * 37 + j * 61) % 10;
    if (HEAVY.has(k)) heavy += d;
    else if (STRONG.has(k)) mid += `<path d="${d}" stroke-opacity=".95" stroke-dasharray="12 1"/>`;
    else if (MID.has(k)) mid += `<path d="${d}" stroke-dasharray="${h > 4 ? '3 1' : '6 1'}"/>`;
    else light += `<path d="${d}" stroke-opacity="${[.35, .5, .4, .6, .3, .45, .55, .35, .65, .4][h]}" stroke-dasharray="${['2 1', '1 1', '3 2', '4 1', '2 2', '5 1', '2 1', '1 2', '3 1', '8 1'][h]}"/>`;
  }));
  return `<style>
:host{display:block;background:#fff;overflow:hidden}
svg{width:100%;height:100%}
text{font-family:"DejaVu Sans",sans-serif;font-weight:700;fill:#111;text-anchor:middle}
</style><svg viewBox="469 162 1488 852" role="img" aria-label="Hero social network">
<g stroke="#4f9f48" stroke-width="1" fill="none">${light}</g>
<g stroke="#3d9d2b" stroke-opacity=".75" stroke-width="1.200" fill="none">${mid}</g>
<path d="${heavy}" stroke="#47a824" stroke-width="2" fill="none"/>
${NODES.map(n => `<circle cx="${n[0] + .5}" cy="${n[1] + .5}" r="${n[2] - .5}" fill="${n[3]}" stroke="#1c2233" stroke-opacity=".65" stroke-width="${n[2] > 10.5 ? 2.5 : 1.7}"/>`).join('')}
${NODES.map(n => { const f = n[2] >= 14 ? 5 : n[2] >= 11 ? 4 : 3; return `<text x="${n[0]}" y="${n[1] + f - 2}" font-size="${f}">${n[4]}</text>`; }).join('')}
</svg>`;
});

/* ---------- right panels ---------- */
define('context-info', `<style>
:host{display:block;height:75px;padding:3px 7px 0;line-height:24px}
dl{margin:0;display:grid;grid-template-columns:60px 1fr}
dt{font-weight:600}dd{margin:0}
p{margin:0}
</style><dl><dt>Nodes:</dt><dd>32 (0.31% visible)</dd><dt>Edges:</dt><dd>374 (0.21% visible)</dd></dl><p>Undirected Graph</p>`);

const STATS = [['Network Overview', ['Average Degree', '23.375'], ['Avg. Weighted Degree', '1148.188'], ['Network Diameter'], ['Graph Density'], ['Modularity'], ['PageRank'], ['Connected Components']],
 ['Node Overview', ['Avg. Clustering Coefficient'], ['Eigenvector Centrality']], ['Edge Overview', ['Avg. Path Length']], ['Dynamic', ['# Nodes'], ['# Edges'], ['Degree'], ['Clustering Coefficient']]];
define('statistics-list', () => `<style>
:host{display:flex;flex-direction:column;min-height:0}
.set{height:32px;text-align:left;padding:0 0 1px 7px;border-top:1px solid #fff}
.list{flex:1;margin:0 1px;background:#fff;border-top:2px solid #b4b6c4;padding-top:8px}
table{width:100%;border-spacing:0;table-layout:fixed}
.cat th{height:22px;padding:0 2px;border:solid #cdd8f2;border-width:1px 0;background:#f7f7f7;text-align:left;font-weight:600;line-height:20px}
.cat div{display:flex;align-items:center;gap:1px}
tbody th,td{padding:1px 4px 0;height:39px;vertical-align:top;font-weight:400;text-align:left;line-height:32px}
.v{text-align:right;padding-right:3px;width:200px}
.r{width:72px;padding:1px 0 0}
.r div{display:flex;align-items:center;justify-content:space-between;height:32px;padding:0 8px 0 8px;background:#f1f0ee;border-bottom:1px solid #d3d1ce}
.r button{display:flex;align-items:center}
</style><button class="set">Settings</button><div class="list"><table><colgroup><col><col style="width:200px"><col style="width:72px"></colgroup>${STATS.map(([c, ...rows]) => `<tbody><tr class="cat"><th colspan="3"><div><ui-icon name="box"></ui-icon>${c}</div></th></tr>${rows.map(([n, v]) => `<tr><th>${n}</th><td class="v">${v || ''}</td><td class="r"><div><button>Run</button><button aria-label="Report"><ui-icon name="${v ? 'helpblue' : 'helpgray'}"></ui-icon></button></div></td></tr>`).join('')}</tbody>`).join('')}</table></div>`);

/* ---------- document viewer ---------- */
define('pdf-desktop', `<style>
:host{display:flex;flex-direction:column;background:#f1f0ee;overflow:hidden;min-width:0}
.body{flex:1;display:flex;min-height:0}
.doc{flex:1;padding:0 70px 0 75px;overflow:hidden}
</style><system-bar></system-bar><pdf-toolbar></pdf-toolbar><find-bar></find-bar>
<div class="body"><find-results></find-results><div class="doc"><slide-page class="a"><slide-one></slide-one></slide-page><slide-page><slide-two></slide-two></slide-page></div></div>`);

define('pdf-toolbar', `<style>
:host{display:flex;align-items:center;gap:15px;height:42px;padding:0 8px 0 6px;background:linear-gradient(#24231f,#3c3b37 6px);font-size:14px}
.page{display:flex;width:92px;height:26px;border-radius:5px;background:#f4f3f1;overflow:hidden;line-height:26px}
.page input{width:38px;border:0;border-right:1px solid #c4c2be;padding:0 0 0 8px;background:#fff;outline:0}
.page span{padding-left:7px;color:#8a8a8a}
.g{display:flex;height:32px;border:1px solid #46443f;border-radius:5px;color:#d5d1c6}
.g button{width:31px;display:grid;place-items:center}
.on{background:#363531;border-color:#2a2926}
.zoom{display:grid;align-items:center;width:92px;height:26px;margin-left:auto;border-radius:5px;background:#f6f5f4}
.zoom>*{grid-area:1/1}
.zoom select{appearance:none;border:0;background:none;height:26px;padding-left:6px;outline:0}
.zoom ui-icon{justify-self:end;margin-right:13px;pointer-events:none}
.end{display:flex;gap:9px}
</style><div class="page"><input value="14" aria-label="Page"><span>of 37</span></div>
<div class="g"><button aria-label="Previous"><ui-icon name="prev"></ui-icon></button><button aria-label="Next"><ui-icon name="next"></ui-icon></button></div>
<div class="g on"><button aria-label="Find"><ui-icon name="search"></ui-icon></button></div>
<div class="g"><button aria-label="Annotations"><ui-icon name="notes"></ui-icon></button></div>
<div class="zoom"><select aria-label="Zoom"><option>99,98%</option></select><ui-icon name="chev" size="15"></ui-icon></div>
<div class="end"><div class="g"><button aria-label="View"><ui-icon name="pagew"></ui-icon></button></div><div class="g"><button aria-label="Menu"><ui-icon name="burger"></ui-icon></button></div></div>`);

define('find-bar', `<style>
:host{display:grid;grid-template-columns:1fr auto 1fr;align-items:center;height:41px;padding:0 14px 0 12px}
.box{grid-column:2;display:flex;align-items:center;width:323px;height:27px;border:1px solid #b0aeaa;border-radius:5px;background:#fafafa;color:#555}
.box>ui-icon:first-child{margin:0 6px 0 12px}
input{flex:1;min-width:0;border:0;background:none;outline:0;padding:0}
.box>ui-icon:nth-of-type(2){margin-right:12px}
.box button{width:27px;height:25px;border-left:1px solid #c9c7c4;display:grid;place-items:center}
.x{justify-self:end}
</style><div class="box"><ui-icon name="search"></ui-icon><input value="layout" aria-label="Find"><ui-icon name="clear"></ui-icon><button aria-label="Previous match"><ui-icon name="chevup" size="15"></ui-icon></button><button aria-label="Next match"><ui-icon name="chev" size="15"></ui-icon></button></div><button class="x" aria-label="Close"><ui-icon name="close" size="14"></ui-icon></button>`);

define('find-results', `<style>
:host{display:block;width:174px;background:#fff;font-size:14px;color:#3c3c3c}
ul{margin:0;padding:0;list-style:none;background:#f7f7f7}
li{display:flex;height:21px;line-height:21px;padding-left:3px;white-space:pre}
li.on{background:linear-gradient(#cfcdca,#e0deda)}
b{font-weight:700}
span{flex:1;overflow:hidden}i{width:18px}
</style><ul><li><span>de   <b>Layout</b> Abraha…</span><i>5</i></li><li class="on"><span>del <b>layout</b> • Elegim…</span><i>16</i></li><li><span>el   <b>layout</b> Fruchter…</span><i>16</i></li><li><span>del <b>layout</b> • Si perd…</span><i>17</i></li><li><span>del <b>layout</b> • Aplica…</span><i>18</i></li></ul>`);

define('slide-page', `<style>
:host{display:block;background:#fff;box-shadow:0 1px 3px #0007;margin-top:16px;overflow:hidden;font-family:Lato,"Open Sans",sans-serif;font-variant-ligatures:none;color:#000}
:host(.a){margin-top:0;height:157px}
</style><slot></slot>`);

define('slide-one', `<style>
:host{display:block}
.fig{width:100%;height:92px}
footer{display:grid;grid-template-columns:1fr auto 1fr;align-items:center;padding:0 53px}
.brand{display:flex;gap:16px;font-size:13px;line-height:16px}
.brand p{margin:18px 0 0}
p{margin:0}
.c{font-size:11px;line-height:15px;color:#8f8f8f;text-align:center;margin-top:11px}
text{font-family:"Open Sans",sans-serif}
</style>
<svg class="fig" viewBox="913 1187 961 92" preserveAspectRatio="xMinYMin meet">
<path d="M963 1187h862v80H963z" fill="#fff"/><path d="M963 1204h163v54H963z" fill="#dedede"/><path d="M963.500 1187v70" stroke="#aaa"/><path d="M966 1202.500h160" stroke="#2a62d8"/><path d="M963 1257h862v10H963z" fill="#d0d0d0"/>
<rect x="975" y="1247.500" width="22" height="8" fill="#ececec"/><rect x="1000.500" y="1247.500" width="18" height="8" fill="#f0f0f0" stroke="#c4c4c4" stroke-width=".6"/><path d="M968 1249h5l-5 4z" fill="#777"/><text x="976" y="1253.500" font-size="5" fill="#777">Presets...</text><text x="1003" y="1253.500" font-size="5" fill="#777">Reset</text>
<path d="M1126 1180h551v87h-551z" fill="#ff8735" stroke="#bf5f1f" stroke-width="2"/>
<path d="M1138 1180h528v76h-528z" fill="#e0e0e0" stroke="#bf5f1f" stroke-width="2"/>
<path d="M1153 1187h512v54h-512z" fill="#fff"/>
<g fill="#f2f2f2" stroke="#bbb" stroke-width=".5"><rect x="1139.500" y="1198" width="12" height="8"/><rect x="1139.500" y="1207" width="12" height="8"/><rect x="1139.500" y="1216" width="12" height="8"/><rect x="1139.500" y="1225" width="12" height="8"/></g>
<circle cx="1146" cy="1201" r="2" fill="none" stroke="#4a78d8"/><path d="M1143 1205l2-2" stroke="#888"/><path d="M1142 1208.500h5v5h-5z" fill="#555"/><text x="1143" y="1222" font-size="6" font-weight="700">A</text><path d="M1141 1223.500h7" stroke="#ff4f86"/><text x="1142" y="1231.500" font-size="6" font-weight="700">A</text>
<circle cx="1148" cy="1247" r="2" fill="#f3d04e"/><path d="M1147 1249h2v3h-2z" fill="#888"/><path d="M1158 1245.500h8v5.500h-8z" fill="#667"/><path d="M1169 1247h3l-1.500 2z"/><text x="1181" y="1252" font-size="9" font-weight="700" style="font-family:'Liberation Serif'">T</text><path d="M1197 1241h26v14h-26z" fill="#c4c4c4"/><path d="M1199 1245l6 6M1213 1245l6 6" stroke="#7c9cc6"/><text x="1227" y="1252" font-size="9" fill="#999" style="font-family:'Liberation Serif'">T</text>
<path d="M1243 1248.500h32M1364 1248.500h32" stroke="#b0b0b0" stroke-width="2"/><circle cx="1249" cy="1248" r="3.500" fill="#fff" stroke="#aaa" stroke-width=".5"/><circle cx="1381" cy="1248" r="3.500" fill="#fff" stroke="#aaa" stroke-width=".5"/>
<text x="1290" y="1251.500" font-size="7" font-weight="700">A</text><text x="1302" y="1251.500" font-size="7" font-weight="700" fill="#4a6fd8">A</text><path d="M1312 1244.500h45v8h-45z" fill="#f1f1f1" stroke="#bbb" stroke-width=".5"/><text x="1315" y="1251" font-size="5">Arial-BoldMT, 32</text><path d="M1403 1244h8v8h-8z"/><path d="M1414 1244.500h6v8h-6z" fill="#fff" stroke="#678"/>
<path d="M1686 1180h150v33h-150z" fill="#ff8735" stroke="#bf5f1f" stroke-width="2"/><text x="1761" y="1198" text-anchor="middle" font-size="22" fill="#fff" style="font-family:Lato,sans-serif">visualización</text>
</svg>
<footer><div class="brand"><svg width="24" height="49" viewBox="0 0 24 49"><g fill="#e4002b"><circle cx="12" cy="3" r="2"/><circle cx="4" cy="10" r="3.500"/><circle cx="12" cy="10" r="3.500"/><circle cx="20" cy="10" r="3.500"/><path d="M4 15.500h16v3H4z"/></g><path d="M1 23h7v17q0 4 5 4 4 0 4-4V23h7v26h-6v-2q-3 2-7 2-10 0-10-9z"/></svg><p>Universidad<br>Rey Juan Carlos</p></div><p class="c">Abraham Duarte - Felipe Alonso - Jesús Sánchez-Oro.<br>Máster en Data Science. ETSII.</p></footer>`);

define('slide-two', `<style>
:host{display:block;padding:0 50px;overflow:hidden;height:600px}
h2{margin:66px 0 0 8px;font-weight:400;font-size:37px;line-height:44px;white-space:nowrap}
hr{margin:44px 0 0;border:0;height:2px;background:#ffb380}
ul{margin:16px 0 0 10px;padding:0;list-style:none}
li{display:flex;font-size:22px;line-height:28px;white-space:pre}
li::before{content:"";width:7px;height:7px;margin:10px 19px 0 0;border-radius:50%;background:#e85d00}
mini-gephi{margin:8px 0 0 40px}
</style><h2>Cambio del color de los vértices</h2><hr><ul><li>Marcamos <i>unique</i>, elegimos un color (gris en el ejemplo) y pulsamos apply.</li></ul><mini-gephi></mini-gephi>`);

/* figure of the second slide: an older Gephi window */
define('mini-gephi', () => {
  let seed = 7; const rnd = () => (seed = (seed * 16807) % 2147483647) / 2147483647;
  let edge = 'M1347 1800';
  for (let y = 1797; y > 1741; y -= 4) edge += `L${1347 + Math.round(rnd() * 3)} ${y}`;
  for (let x = 1350; x < 1470; x += 4) edge += `L${x} ${x < 1366 ? 1740 - Math.round((x - 1350) / 3) + Math.round(rnd() * 2) : x > 1452 ? 1733 + Math.round((x - 1452) / 3) : 1732 + Math.round(rnd() * 3)}`;
  for (let y = 1742; y < 1800; y += 4) edge += `L${1472 + Math.round(rnd() * 3)} ${y}`;
  edge += 'L1477 1800z';
  let dots = '';
  for (let i = 0; i < 620; i++) { const x = 1350 + Math.round(rnd() * 122), y = 1736 + Math.round(rnd() * 64); if (x + y > 3092) dots += `M${x} ${y}h1.600v1.600h-1.600z`; }
  const t = (x, y, s, o = '') => `<text x="${x}" y="${y}" ${o}>${s}</text>`;
  const rows = [[1682, 'Average Degree'], [1694, 'Avg. Weighted Degree'], [1705, 'Network Diameter'], [1717, 'Graph Density'], [1728, 'Modularity'], [1740, 'PageRank'], [1751, 'Connected Components'], [1771, 'Avg. Clustering Coefficient'], [1782, 'Eigenvector Centrality']];
  const cats = [[1674, 'Network Overview'], [1762, 'Node Overview'], [1793, 'Edge Overview']];
  const put = (n, x, y, s) => `<g transform="translate(${x} ${y}) scale(${s})">${ICONS[n]}</g>`;
  return `<style>:host{display:block;max-width:782px}svg{width:100%}text{font:6px Lato,"Open Sans",sans-serif;fill:#111}.b{font-weight:700}.s{font-size:5px;font-family:"Open Sans"}</style>
<svg viewBox="1003 1568 782 240" role="img" aria-label="Gephi 0.9.0">
<defs><linearGradient id="tb" x2="0" y2="1"><stop stop-color="#eee"/><stop offset="1" stop-color="#d2d2d2"/></linearGradient><linearGradient id="hd" x2="0" y2="1"><stop stop-color="#b4b4b4"/><stop offset="1" stop-color="#909090"/></linearGradient></defs>
<path d="M1003 1568h782v240h-782z" fill="#fff"/><path d="M1003 1568h782v10h-782z" fill="url(#tb)"/>
<circle cx="1009" cy="1573" r="2.700" fill="#fc5b57"/><circle cx="1017.500" cy="1573" r="2.700" fill="#e5a92e"/><circle cx="1025.500" cy="1573" r="2.700" fill="#27b83d"/>
${t(1394, 1575, 'Gephi 0.9.0 - Project 1 - Project 2', 'text-anchor="middle" class="s"')}
<path d="M1003 1590l12-12M1003 1584l6-6M1020 1595l16-16M1040 1595l16-16" stroke="#e3e3e3"/>
<rect x="1008" y="1582" width="65" height="8.500" fill="#eee"/><rect x="1081" y="1582" width="65" height="8.500" fill="#b4b4b0"/><rect x="1154" y="1582" width="66" height="8.500" fill="#b4b4b0"/><path d="M1008 1590.500h65M1081 1590.500h65M1154 1590.500h66M1081 1582.500h65M1154 1582.500h66" stroke="#777" stroke-width=".7"/>
${put('globe', 1010, 1583, .43)}${put('grid', 1083, 1583, .43)}${put('screen', 1156, 1583, .43)}
${t(1041, 1588, 'Overview', 'text-anchor="middle" class="s"')}${t(1114, 1588, 'Data Laboratory', 'text-anchor="middle" class="s"')}${t(1187, 1588, 'Preview', 'text-anchor="middle" class="s"')}
<g stroke="#000" fill="none"><path d="M1722 1578q4 8 11 8 8 0 14-8M1725 1595q6-8 13 0"/><path d="M1739 1578q-3 8 3 14 7 4 12-6l5-8" stroke-width="2"/><path d="M1756 1595q2-12 14-14-6 4-8 14M1769 1595q0-12 4-12 6 2 4 12" stroke-width="3"/></g>
<path d="M1003 1595h782v213h-782z" fill="#666"/><path d="M1003 1595h47v9h-47z" fill="#eee"/><path d="M1005 1597h6v5h-6z" fill="#fff"/>${t(1013, 1601.5, 'Workspace 1', 'class="s"')}
<circle cx="1046" cy="1599.500" r="2" fill="none" stroke="#999" stroke-width=".7"/>
<path d="M1744 1595h20v5h-20zM1766 1595h19v5h-19zM1616 1606h20v5h-20zM1638 1606h7v5h-7z" fill="#999"/><path d="M1747 1597.500l3-1.500v3zM1761 1597.500l-3-1.500v3zM1780 1596.500h3l-1.500 2zM1619 1608.500l3-1.500v3zM1633 1608.500l-3-1.500v3zM1640 1607.500h3l-1.500 2z" fill="#333"/>
<path d="M1004 1606h157v8h-157zM1004 1760h157v8h-157zM1647 1606h137v8h-137zM1647 1649h137v8h-137z" fill="url(#hd)"/>
<path d="M1004 1614h157v145h-157zM1004 1768h157v40h-157z" fill="#e2e2e2"/>
<path d="M1004 1606h38v8h-38zM1004 1760h27v8h-27zM1647 1606h28v8h-28zM1671 1649h31v8h-31z" fill="#f0f0f0"/><path d="M1004 1606h38" stroke="#5b9be0"/>
${t(1007, 1612, 'Appearance', 'class="s"')}${t(1007, 1766, 'Layout', 'class="s"')}
<path d="M1004 1615h19v12h-19zM1004 1629h19v10h-19z" fill="#cfcfcf"/><path d="M1004 1627.500h157M1004 1639.500h157" stroke="#777"/>
${t(1008, 1623, 'Nodes', 'class="s"')}${t(1027, 1623, 'Edges', 'class="s"')}${t(1007, 1635.5, 'Unique', 'class="s"')}${t(1029, 1635.5, 'Attribute', 'class="s"')}
<path d="M1007.500 1642.500h5v5h-5z" fill="#c0c0c0" stroke="#aaa" stroke-width=".5"/>${t(1015, 1647.5, '#c0c0c0')}
<path d="M1108 1614h13v12h-13z" fill="#c8c8c8"/>${put('palette', 1111, 1617, .45)}${put('acolor', 1137, 1617, .5)}${put('tsize', 1150, 1617, .42)}
<rect x="1100.500" y="1608.500" width="28" height="27" fill="none" stroke="#bf5f1f" stroke-width="5.500"/><rect x="1100.500" y="1608.500" width="28" height="27" fill="none" stroke="#e5762c" stroke-width="2.500"/>
<rect x="1122.500" y="1747.500" width="35" height="9" rx="1.500" fill="#fff" stroke="#6aa4e8"/>${put('play', 1130, 1748.5, .42)}${t(1138, 1754.5, 'Apply')}
<rect x="1008.500" y="1773.500" width="149" height="9" rx="1.500" fill="#fff" stroke="#c4c4c4" stroke-width=".7"/><rect x="1149" y="1774" width="8" height="8.500" rx="1" fill="#2f86f6"/><path d="M1151.500 1777.500l1.500-2 1.500 2zM1151.500 1779l1.500 2 1.500-2z" fill="#fff"/>${t(1014, 1780, '----Choose a layout')}
<circle cx="1010" cy="1796" r="2.800" fill="#888"/><rect x="1129" y="1792" width="28" height="9" fill="#f2f2f2"/>${t(1142, 1798, 'Run', 'class="s"')}<path d="M1135 1793.500l3 2.500-3 2.500z" fill="#777"/>
<path d="M1162 1614h484v194h-484z" fill="#e2e2e2"/><path d="M1176 1614h470v12h-470z" fill="#d3d3d3"/><path d="M1176 1626h470v182h-470z" fill="#fff"/><path d="M1162 1606h28v8h-28z" fill="#f0f0f0"/><path d="M1192 1606h40v8h-40z" fill="#bcbcb4"/><path d="M1162 1615h14v11h-14z" fill="#fff"/>
<g transform="translate(1164 1615) scale(.38)" stroke="#000">${GEPHI_G}</g>
${t(1165, 1612, 'Graph', 'class="s"')}${t(1200, 1612, 'Data Table', 'class="s"')}${t(1178, 1622, 'Dragging', 'style="font-size:4px"')}${t(1198, 1622, '(Configure)', 'style="font-size:4px;fill:#1a1aff"')}<path d="M1248 1614h1v12h-1z" fill="#eee"/>
<path d="M1163 1650h12v12h-12z" fill="#c9c9c9"/>
${['arrow', 'rect', 'hand', '', 'brush', 'diamond', 'bucket', 'pencil', 'pencil', 'plane', 'heat', 'cursorq'].map((n, i) => n && put(n, 1165.5, [1629, 1641, 1653, 0, 1670, 1682, 1694, 1707, 1719, 1731, 1743, 1755][i], .4)).join('')}
<path d="${edge}" fill="#000"/><path d="${dots}" fill="#b9b9b9"/>
<path d="M1647 1614h137v34h-137zM1647 1657h137v10h-137z" fill="#e0e0e0"/><path d="M1647 1666h137v142h-137z" fill="#fff"/><path d="M1647 1658h22v7h-22z" fill="#f6f6f6"/>
${t(1649, 1612, 'Context', 'class="s"')}${t(1650, 1623, 'Nodes:', 'class="b s"')}${t(1673, 1623, '1000', 'class="s"')}${t(1650, 1632, 'Edges:', 'class="b s"')}${t(1673, 1632, '14116', 'class="s"')}${t(1650, 1641, 'Directed Graph', 'class="s"')}
${t(1653, 1655, 'Filters', 'class="s"')}${t(1674, 1655, 'Statistics', 'class="s"')}${t(1649, 1663.5, 'Settings', 'class="s"')}
<path d="M1647 1667.500h137" stroke="#cdd8f2"/>
${cats.map(([y, s]) => `<path d="M1647 ${y - 5}h137v9h-137z" fill="#f7f7f7" stroke="#cdd8f2" stroke-width=".5"/><path d="M1649.500 ${y - 2}h3v3h-3z" fill="none" stroke="#555" stroke-width=".6"/>${t(1655, y + 2, s, 'class="b"')}`).join('')}
${rows.concat([[1802, '']]).map(([y, s]) => `${s && t(1649, y + 2, s)}<path d="M1758.500 ${y - 4}h12v8h-12zM1772 ${y - 4}h10v8h-10z" fill="#efefef" stroke="#c4c4c4" stroke-width=".7"/>${s && t(1760, y + 2, 'Run', 'class="s"')}<circle cx="1777" cy="${y}" r="1.800" fill="#aaa"/>`).join('')}
</svg>`;
});
</script>
</body>
</html>
